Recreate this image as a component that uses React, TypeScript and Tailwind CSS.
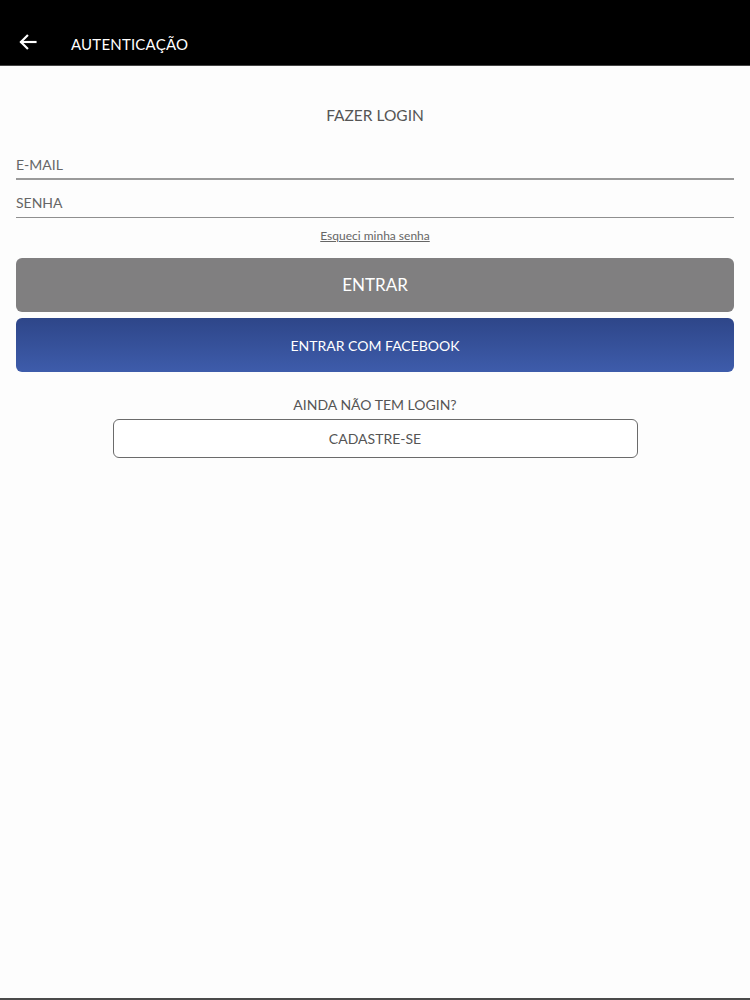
import React from "react";

export default function App() {
  const font = { fontFamily: "Lato, 'Open Sans', sans-serif" };
  return (
    <div className="w-[750px] h-[1000px] bg-[#fdfdfd] flex flex-col" style={font}>
      <div className="h-[66px] bg-black border-b border-[#444] flex items-end pb-[11px] shrink-0">
        <svg width="20" height="20" viewBox="0 0 24 24" className="ml-[18px] mb-[2px]" fill="none" stroke="white" strokeWidth="2.6" strokeLinecap="square">
          <path d="M21 12H4" />
          <path d="M11 4.5L3.5 12L11 19.5" />
        </svg>
        <span className="ml-[33px] text-white text-[15px] leading-[20px] tracking-[0.2px]">AUTENTICAÇÃO</span>
      </div>
      <div className="flex-1 flex flex-col px-4">
        <div className="text-center text-[#555] text-[15.5px] leading-5 mt-[39px]">FAZER LOGIN</div>
        <div className="mt-[30px] border-b-2 border-[#9a9a9a] pb-[3px] text-[14px] leading-5 text-[#666]">E-MAIL</div>
        <div className="mt-[13px] border-b border-[#8f8f8f] pb-[4px] text-[14px] leading-5 text-[#666]">SENHA</div>
        <div className="text-center mt-[10px] text-[12px] leading-4 text-[#666] underline">Esqueci minha senha</div>
        <button className="mt-[14px] h-[54px] rounded-[6px] bg-[#807f80] text-white text-[17px]">ENTRAR</button>
        <button className="mt-[6px] h-[54px] rounded-[6px] bg-gradient-to-b from-[#2e4689] to-[#3e5cab] text-white text-[14px]">ENTRAR COM FACEBOOK</button>
        <div className="text-center mt-[23px] text-[14px] leading-5 text-[#555]">AINDA NÃO TEM LOGIN?</div>
        <div className="flex justify-center mt-[4px]">
          <button className="w-[525px] h-[39px] rounded-[6px] border border-[#6b6b6b] bg-white text-[14px] text-[#555]">CADASTRE-SE</button>
        </div>
      </div>
      <div className="h-[2px] bg-[#4a4a4a] shrink-0" />
    </div>
  );
}
